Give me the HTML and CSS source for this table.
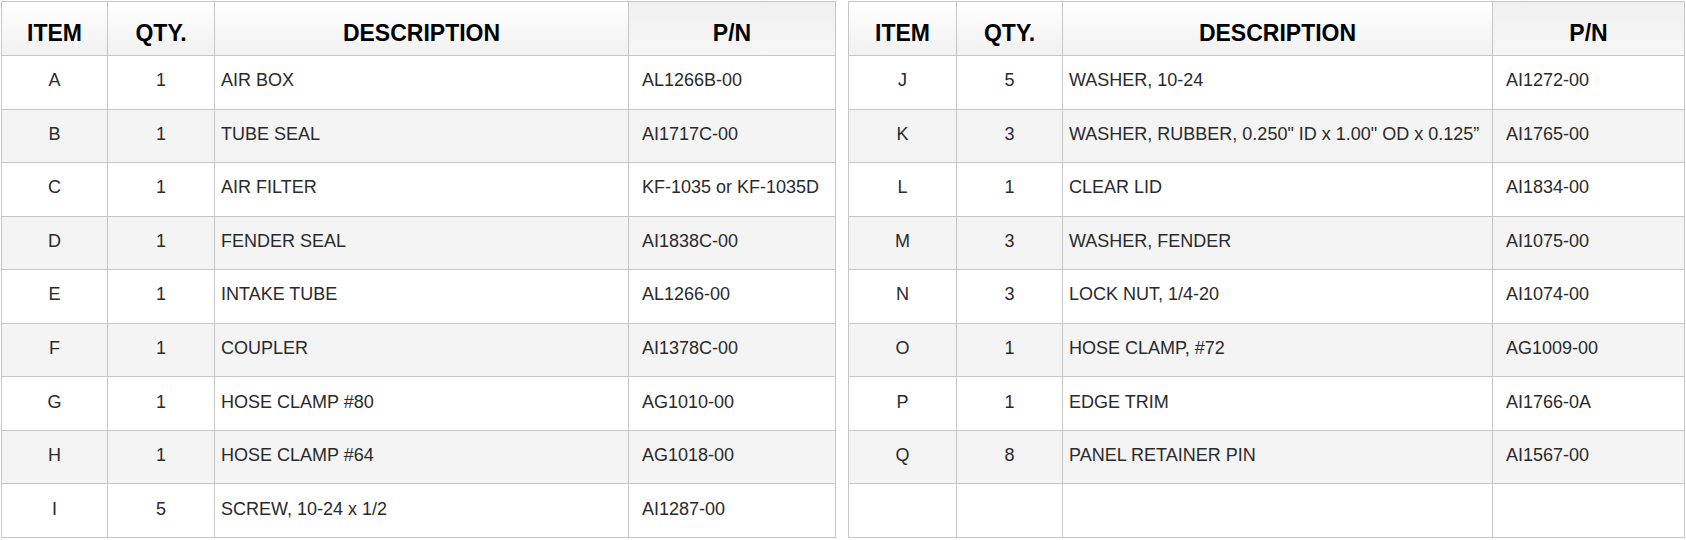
FILE: index.html
```html
<!DOCTYPE html>
<html>
<head>
<meta charset="utf-8">
<link rel="stylesheet" href="styles.css">
</head>
<body>
<div class="page">
  <div class="parts parts-left">
    <div class="cell head">ITEM</div><div class="cell head">QTY.</div><div class="cell head">DESCRIPTION</div><div class="cell head pn-head">P/N</div>
    <div class="cell c">A</div><div class="cell c">1</div><div class="cell d">AIR BOX</div><div class="cell p">AL1266B-00</div>
    <div class="cell c alt">B</div><div class="cell c alt">1</div><div class="cell d alt">TUBE SEAL</div><div class="cell p alt">AI1717C-00</div>
    <div class="cell c">C</div><div class="cell c">1</div><div class="cell d">AIR FILTER</div><div class="cell p">KF-1035 or KF-1035D</div>
    <div class="cell c alt">D</div><div class="cell c alt">1</div><div class="cell d alt">FENDER SEAL</div><div class="cell p alt">AI1838C-00</div>
    <div class="cell c">E</div><div class="cell c">1</div><div class="cell d">INTAKE TUBE</div><div class="cell p">AL1266-00</div>
    <div class="cell c alt">F</div><div class="cell c alt">1</div><div class="cell d alt">COUPLER</div><div class="cell p alt">AI1378C-00</div>
    <div class="cell c">G</div><div class="cell c">1</div><div class="cell d">HOSE CLAMP #80</div><div class="cell p">AG1010-00</div>
    <div class="cell c alt">H</div><div class="cell c alt">1</div><div class="cell d alt">HOSE CLAMP #64</div><div class="cell p alt">AG1018-00</div>
    <div class="cell c">I</div><div class="cell c">5</div><div class="cell d">SCREW, 10-24 x 1/2</div><div class="cell p">AI1287-00</div>
  </div>
  <div class="parts parts-right">
    <div class="cell head">ITEM</div><div class="cell head">QTY.</div><div class="cell head">DESCRIPTION</div><div class="cell head pn-head">P/N</div>
    <div class="cell c">J</div><div class="cell c">5</div><div class="cell d">WASHER, 10-24</div><div class="cell p">AI1272-00</div>
    <div class="cell c alt">K</div><div class="cell c alt">3</div><div class="cell d alt">WASHER, RUBBER, 0.250" ID x 1.00" OD x 0.125”</div><div class="cell p alt">AI1765-00</div>
    <div class="cell c">L</div><div class="cell c">1</div><div class="cell d">CLEAR LID</div><div class="cell p">AI1834-00</div>
    <div class="cell c alt">M</div><div class="cell c alt">3</div><div class="cell d alt">WASHER, FENDER</div><div class="cell p alt">AI1075-00</div>
    <div class="cell c">N</div><div class="cell c">3</div><div class="cell d">LOCK NUT, 1/4-20</div><div class="cell p">AI1074-00</div>
    <div class="cell c alt">O</div><div class="cell c alt">1</div><div class="cell d alt">HOSE CLAMP, #72</div><div class="cell p alt">AG1009-00</div>
    <div class="cell c">P</div><div class="cell c">1</div><div class="cell d">EDGE TRIM</div><div class="cell p">AI1766-0A</div>
    <div class="cell c alt">Q</div><div class="cell c alt">8</div><div class="cell d alt">PANEL RETAINER PIN</div><div class="cell p alt">AI1567-00</div>
    <div class="cell c"></div><div class="cell c"></div><div class="cell d"></div><div class="cell p"></div>
  </div>
</div>
</body>
</html>
```

FILE: styles.css
```css
html, body {
  margin: 0;
  padding: 0;
  background: #ffffff;
}
body {
  font-family: "Liberation Sans", Arial, Helvetica, sans-serif;
  color: #2a2a2a;
}
.page {
  display: flex;
  gap: 12px;
  padding: 1px 0 0 1px;
  align-items: flex-start;
}
.parts {
  display: grid;
  grid-template-rows: 54px repeat(9, 53.56px);
  border-left: 1px solid #c6c6c6;
  border-top: 1px solid #c6c6c6;
}
.parts-left {
  grid-template-columns: 106px 107px 414px 207px;
}
.parts-right {
  grid-template-columns: 108px 106px 430px 192px;
}
.cell {
  box-sizing: border-box;
  border-right: 1px solid #c6c6c6;
  border-bottom: 1px solid #c6c6c6;
  display: flex;
  align-items: center;
  font-size: 18px;
  line-height: 21px;
  padding-bottom: 3px;
  white-space: nowrap;
  overflow: hidden;
}
.head {
  justify-content: center;
  align-items: flex-start;
  padding: 18px 0 0 0;
  font-size: 23px;
  line-height: 26px;
  font-weight: bold;
  color: #000000;
  background: linear-gradient(to bottom, #ffffff 0%, #f1f1f1 100%);
}
.pn-head {
  background: linear-gradient(to bottom, #f0f0f0 0%, #f6f6f6 100%);
}
.c {
  justify-content: center;
}
.d {
  padding-left: 6px;
}
.p {
  padding-left: 13px;
}
.alt {
  background: #f4f4f4;
}
```
